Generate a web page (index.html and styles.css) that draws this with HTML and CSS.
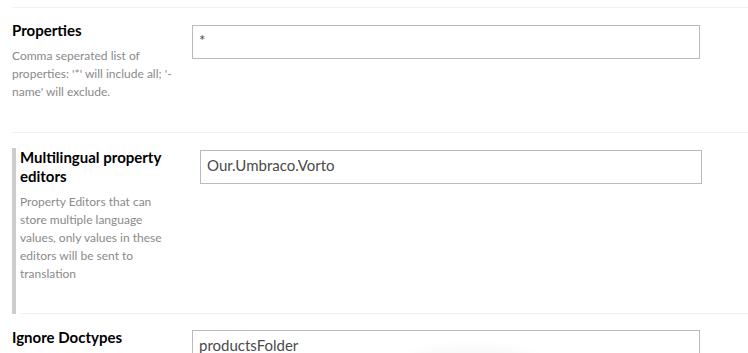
FILE: index.html
```html
<!DOCTYPE html>
<html lang="en">
<head>
<meta charset="utf-8">
<title>Settings</title>
<link rel="stylesheet" href="styles.css">
</head>
<body>
<div class="list">
  <div class="divider"></div>
  <div class="row">
    <div class="label">
      <div class="title">Properties</div>
      <div class="desc">Comma seperated list of properties: '*' will include all; '-name' will exclude.</div>
    </div>
    <div class="control first">
      <div class="input w1">*</div>
    </div>
  </div>
  <div class="divider"></div>
  <div class="row hl">
    <div class="inner">
      <div class="label">
        <div class="title">Multilingual property editors</div>
        <div class="desc">Property Editors that can store multiple language values, only values in these editors will be sent to translation</div>
      </div>
      <div class="control">
        <div class="input w2">Our.Umbraco.Vorto</div>
      </div>
    </div>
  </div>
  <div class="row last">
    <div class="label">
      <div class="title">Ignore Doctypes</div>
    </div>
    <div class="control">
      <div class="input w1">productsFolder</div>
    </div>
  </div>
</div>
<div class="shadow"></div>
</body>
</html>
```
FILE: styles.css
```css
html, body {
  margin: 0;
  padding: 0;
  background: #ffffff;
  height: 353px;
  overflow: hidden;
}
body {
  font-family: Lato, "Open Sans", "Liberation Sans", sans-serif;
  position: relative;
}
.list {
  margin-left: 12px;
  padding-top: 7px;
}
.divider {
  height: 1px;
  background: #f1f1f1;
}
.row {
  display: flex;
  padding: 13px 0 31px;
}
.row.hl {
  margin-top: 15px;
  padding: 0 0 0 4px;
  border-left: 4px solid #cccccc;
}
.row.hl .inner {
  display: flex;
  flex: 1;
  padding-bottom: 30px;
  border-bottom: 1px solid #f1f1f1;
}
.row.last {
  padding-top: 14px;
}
.label {
  width: 160px;
  padding-right: 20px;
  flex: none;
}
.title {
  font-size: 15px;
  line-height: 19px;
  font-weight: 700;
  color: #000000;
}
.desc {
  margin-top: 7px;
  font-size: 12px;
  line-height: 18px;
  color: #8a8a8a;
}
.control {
  padding-top: 2px;
}
.control.first {
  padding-top: 4px;
}
.input {
  box-sizing: border-box;
  height: 34px;
  border: 1px solid #bbbbbb;
  padding: 4px 6px;
  font-size: 15px;
  line-height: 20px;
  color: #4a4a4a;
  background: #ffffff;
}
.w1 { width: 508px; }
.w2 { width: 502px; }
.shadow {
  position: absolute;
  left: 410px;
  top: 349px;
  width: 125px;
  height: 24px;
  border-radius: 50%;
  background: rgba(0, 0, 0, 0.035);
  filter: blur(6px);
}
```
